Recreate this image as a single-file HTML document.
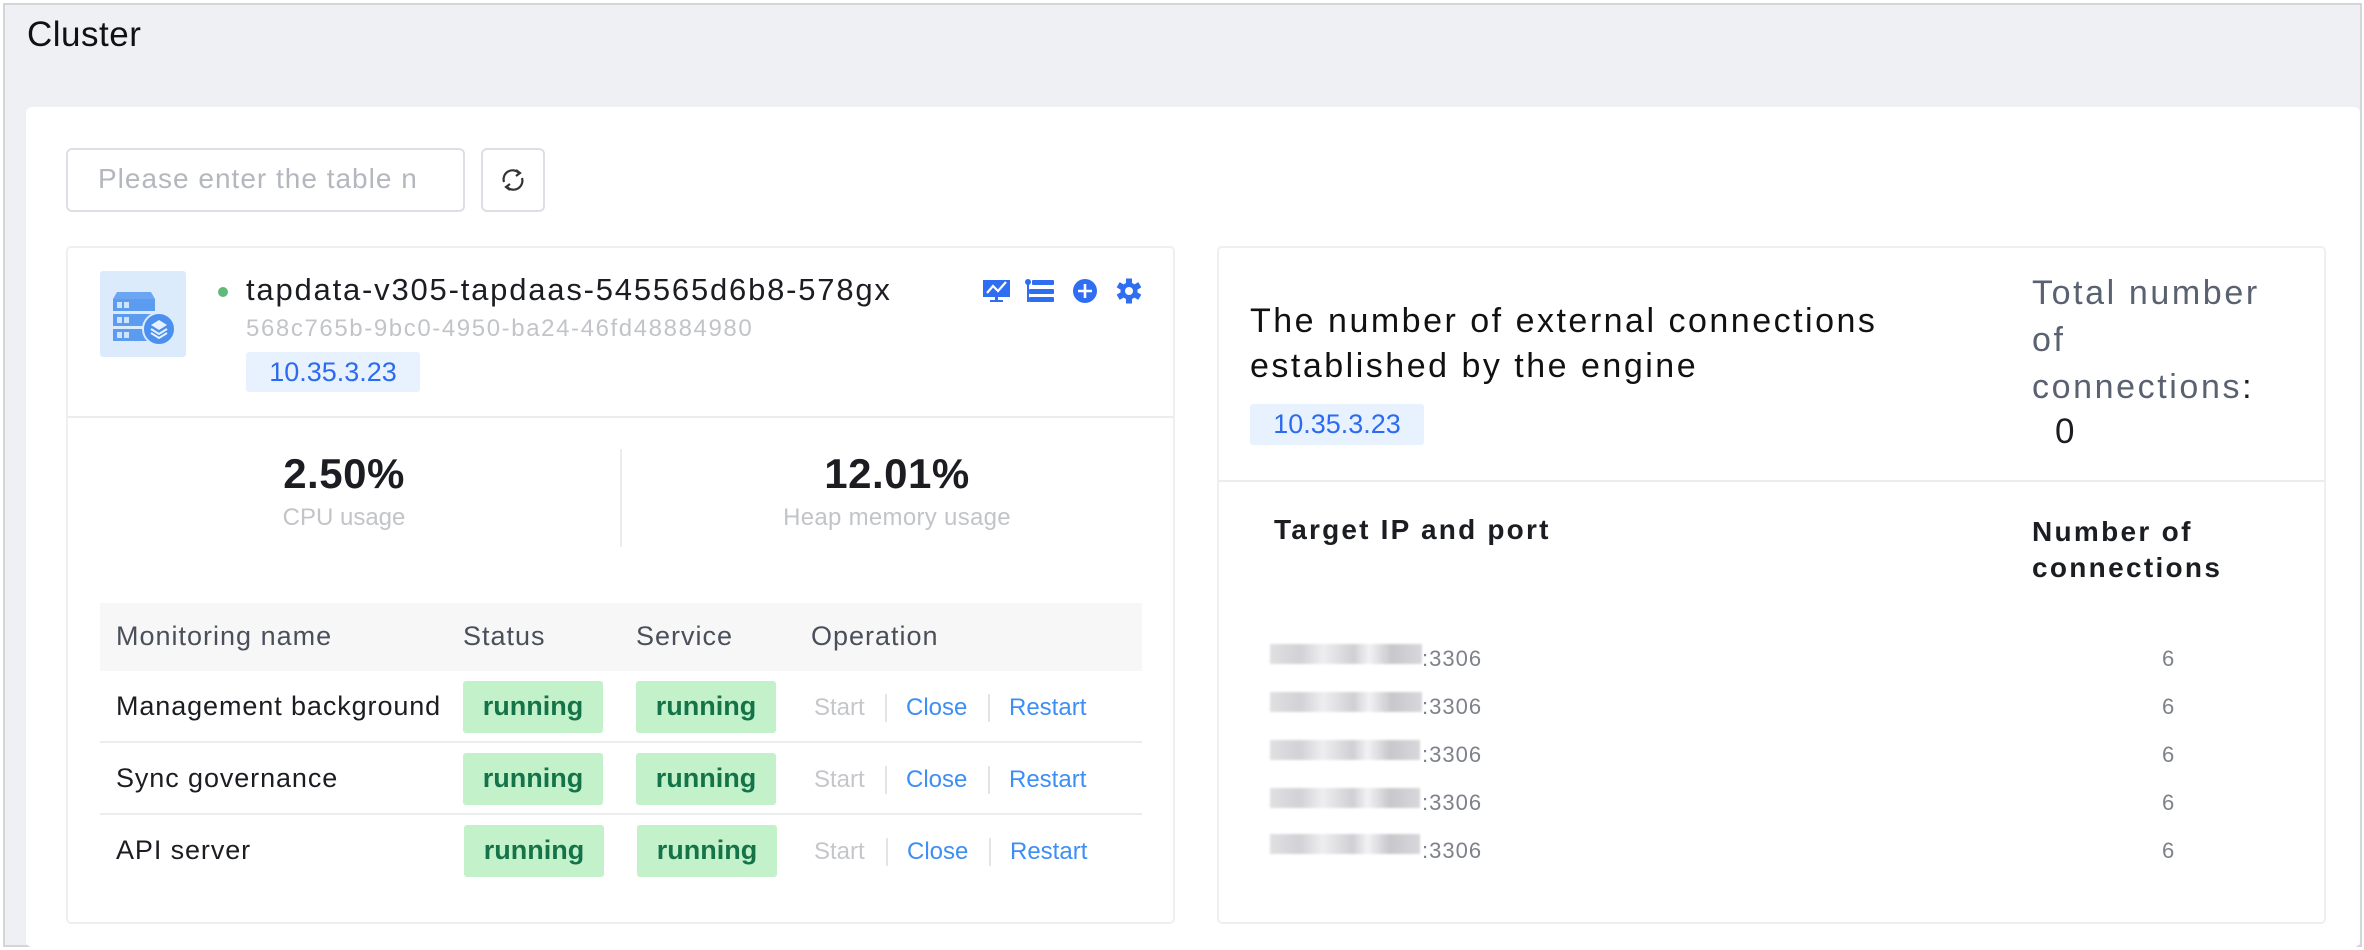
<!DOCTYPE html>
<html><head><meta charset="utf-8"><style>
*{box-sizing:border-box;margin:0;padding:0}
body{width:2364px;height:950px;background:#fff;font-family:"Liberation Sans",sans-serif;position:relative;overflow:hidden}
.frame{position:absolute;left:3px;top:3px;width:2359px;height:944px;border:2px solid #d4d5d8;background:#eff0f3}
.abs{position:absolute}
.t{position:absolute;white-space:nowrap}
.panel{position:absolute;left:26px;top:107px;width:2334px;height:840px;background:#fff;border-radius:6px}
.card{position:absolute;border:2px solid #eeeff1;border-radius:5px;background:#fff}
.tag{position:absolute;background:#e8f1fe;color:#2c6bf0;border-radius:3px;font-size:27px;text-align:center}
.badge{position:absolute;width:140px;height:52px;background:#c2f1ca;color:#157349;font-size:27px;font-weight:bold;text-align:center;line-height:50px;border-radius:3px}
.op{position:absolute;font-size:24px}
.sep{position:absolute;width:2px;height:28px;background:#e3e4e7}
.blur{position:absolute;height:20px;background:linear-gradient(90deg,#e0e0e3 0,#d2d2d6 20%,#eeeef0 35%,#d0d0d4 55%,#f2f2f4 65%,#c8c8cc 80%,#d8d8dc 100%);filter:blur(1px)}
.r{font-size:22px;color:#7d818a;letter-spacing:1px}
</style></head><body>
<div class="frame"></div>
<div class="t" style="left:27px;top:15px;font-size:35px;letter-spacing:0.5px;color:#111">Cluster</div>
<div class="panel"></div>
<div class="abs" style="left:66px;top:148px;width:399px;height:64px;border:2px solid #dcdfe4;border-radius:6px"></div>
<div class="t" style="left:98px;top:163px;font-size:28px;letter-spacing:1px;color:#b4b7bd">Please enter the table n</div>
<div class="abs" style="left:481px;top:148px;width:64px;height:64px;border:2px solid #dcdfe4;border-radius:6px"></div>
<svg class="abs" style="left:499px;top:165px" width="28" height="30" viewBox="0 0 28 30"><path d="M5 17a9 9 0 0 1 15-9" stroke="#333" stroke-width="2.2" fill="none"/><path d="M17 5l4 3-4 3" stroke="#333" stroke-width="2.2" fill="none"/><path d="M23 13a9 9 0 0 1-15 9" stroke="#333" stroke-width="2.2" fill="none"/><path d="M11 25l-4-3 4-3" stroke="#333" stroke-width="2.2" fill="none"/></svg>

<div class="card" style="left:66px;top:246px;width:1109px;height:678px"></div>
<div class="abs" style="left:100px;top:271px;width:86px;height:86px;background:#dcebfc;border-radius:3px"></div>
<svg class="abs" style="left:100px;top:271px" width="86" height="86" viewBox="0 0 86 86">
<path d="M13 28l4-7h34l4 7z" fill="#6aa6f2"/><rect x="13" y="28" width="42" height="12" fill="#5b9cf0"/><rect x="13" y="43" width="42" height="12" fill="#5b9cf0"/><rect x="13" y="58" width="42" height="12" fill="#5b9cf0"/>
<rect x="17" y="31" width="5" height="6" fill="#cfe3fb"/><rect x="24" y="31" width="5" height="6" fill="#cfe3fb"/><rect x="17" y="46" width="5" height="6" fill="#cfe3fb"/><rect x="24" y="46" width="5" height="6" fill="#cfe3fb"/><rect x="17" y="61" width="5" height="6" fill="#cfe3fb"/><rect x="24" y="61" width="5" height="6" fill="#cfe3fb"/>
<circle cx="59" cy="58" r="16" fill="#4b90ee" stroke="#dcebfc" stroke-width="2"/>
<path d="M51 54l8-5 8 5-8 5z" fill="#e8f1fe"/><path d="M51 58l8 5 8-5" stroke="#e8f1fe" stroke-width="2" fill="none"/><path d="M51 62l8 5 8-5" stroke="#e8f1fe" stroke-width="2" fill="none"/></svg>
<div class="abs" style="left:218px;top:287px;width:10px;height:10px;border-radius:50%;background:#5fb97a"></div>
<div class="t" style="left:246px;top:272px;font-size:31px;letter-spacing:1.8px;color:#1b1d22">tapdata-v305-tapdaas-545565d6b8-578gx</div>
<div class="t" style="left:246px;top:315px;font-size:24px;letter-spacing:1.6px;color:#c2c4c8">568c765b-9bc0-4950-ba24-46fd48884980</div>
<div class="tag" style="left:246px;top:352px;width:174px;height:40px;line-height:40px">10.35.3.23</div>
<svg class="abs" style="left:982px;top:278px" width="164" height="26" viewBox="0 0 164 26">
<rect x="1" y="2" width="27" height="17" fill="#2f6ef0"/><path d="M5 15l6-7 5 5 8-9" stroke="#fff" stroke-width="2.2" fill="none"/><rect x="13" y="19" width="3" height="4" fill="#2f6ef0"/><rect x="8" y="22" width="13" height="2" fill="#2f6ef0"/>
<circle cx="46" cy="4" r="3" fill="#2f6ef0"/><rect x="45" y="4" width="2" height="20" fill="#2f6ef0"/><rect x="50" y="2" width="22" height="5" rx="1" fill="#2f6ef0"/><rect x="47" y="11" width="25" height="5" rx="1" fill="#2f6ef0"/><rect x="47" y="19" width="25" height="5" rx="1" fill="#2f6ef0"/>
<circle cx="103" cy="13" r="12" fill="#2f6ef0"/><path d="M103 6v14M96 13h14" stroke="#fff" stroke-width="2.6"/>
<g transform="translate(147,13)"><circle r="8.5" fill="#2f6ef0"/><g fill="#2f6ef0"><rect x="-3" y="-12.5" width="6" height="25"/><rect x="-3" y="-12.5" width="6" height="25" transform="rotate(60)"/><rect x="-3" y="-12.5" width="6" height="25" transform="rotate(120)"/></g><circle r="4" fill="#fff"/></g></svg>
<div class="abs" style="left:68px;top:416px;width:1105px;height:2px;background:#ebecee"></div>
<div class="t" style="left:194px;top:450px;width:300px;text-align:center;font-size:42px;letter-spacing:0.5px;font-weight:bold;color:#1b1d22">2.50%</div>
<div class="t" style="left:194px;top:504px;width:300px;text-align:center;font-size:24px;color:#c2c4c8">CPU usage</div>
<div class="abs" style="left:620px;top:449px;width:2px;height:98px;background:#ebecee"></div>
<div class="t" style="left:747px;top:450px;width:300px;text-align:center;font-size:42px;letter-spacing:0.5px;font-weight:bold;color:#1b1d22">12.01%</div>
<div class="t" style="left:722px;top:504px;width:350px;text-align:center;font-size:24px;letter-spacing:0.3px;color:#c2c4c8">Heap memory usage</div>

<div class="abs" style="left:100px;top:603px;width:1042px;height:68px;background:#f7f7f8"></div>
<div class="t" style="left:116px;top:621px;font-size:27px;letter-spacing:1px;color:#4a4f5a">Monitoring name</div>
<div class="t" style="left:463px;top:621px;font-size:27px;letter-spacing:1px;color:#4a4f5a">Status</div>
<div class="t" style="left:636px;top:621px;font-size:27px;letter-spacing:1px;color:#4a4f5a">Service</div>
<div class="t" style="left:811px;top:621px;font-size:27px;letter-spacing:1px;color:#4a4f5a">Operation</div>
<div class="abs" style="left:100px;top:741px;width:1042px;height:2px;background:#ebecee"></div>
<div class="abs" style="left:100px;top:813px;width:1042px;height:2px;background:#ebecee"></div>

<div class="t" style="left:116px;top:691px;font-size:27px;letter-spacing:0.9px;color:#1b1d22">Management background</div>
<div class="badge" style="left:463px;top:681px">running</div><div class="badge" style="left:636px;top:681px">running</div>
<div class="op" style="left:814px;top:694px;color:#c4c6ca">Start</div><div class="sep" style="left:885px;top:694px"></div>
<div class="op" style="left:906px;top:694px;color:#3d8ef5">Close</div><div class="sep" style="left:988px;top:694px"></div>
<div class="op" style="left:1009px;top:694px;color:#3d8ef5">Restart</div>

<div class="t" style="left:116px;top:763px;font-size:27px;letter-spacing:0.9px;color:#1b1d22">Sync governance</div>
<div class="badge" style="left:463px;top:753px">running</div><div class="badge" style="left:636px;top:753px">running</div>
<div class="op" style="left:814px;top:766px;color:#c4c6ca">Start</div><div class="sep" style="left:885px;top:766px"></div>
<div class="op" style="left:906px;top:766px;color:#3d8ef5">Close</div><div class="sep" style="left:988px;top:766px"></div>
<div class="op" style="left:1009px;top:766px;color:#3d8ef5">Restart</div>

<div class="t" style="left:116px;top:835px;font-size:27px;letter-spacing:0.9px;color:#1b1d22">API server</div>
<div class="badge" style="left:464px;top:825px">running</div><div class="badge" style="left:637px;top:825px">running</div>
<div class="op" style="left:814px;top:838px;color:#c4c6ca">Start</div><div class="sep" style="left:886px;top:838px"></div>
<div class="op" style="left:907px;top:838px;color:#3d8ef5">Close</div><div class="sep" style="left:989px;top:838px"></div>
<div class="op" style="left:1010px;top:838px;color:#3d8ef5">Restart</div>

<div class="card" style="left:1217px;top:246px;width:1109px;height:678px"></div>
<div class="t" style="left:1250px;top:299px;font-size:34px;letter-spacing:2.5px;line-height:45px;color:#111">The number of external connections<br>established by the engine</div>
<div class="tag" style="left:1250px;top:404px;width:174px;height:41px;line-height:41px">10.35.3.23</div>
<div class="t" style="left:2032px;top:270px;font-size:34px;letter-spacing:2.6px;line-height:47px;color:#5a6170">Total number<br>of<br>connections<span style="color:#1b1d22">:</span></div>
<div class="t" style="left:2055px;top:412px;font-size:35px;color:#1b1d22">0</div>
<div class="abs" style="left:1219px;top:480px;width:1105px;height:2px;background:#ebecee"></div>
<div class="t" style="left:1274px;top:514px;font-size:28px;letter-spacing:2.2px;font-weight:bold;color:#1b1d22">Target IP and port</div>
<div class="t" style="left:2032px;top:514px;font-size:28px;letter-spacing:2.3px;line-height:36px;font-weight:bold;color:#1b1d22">Number of<br>connections</div>

<div class="blur" style="left:1270px;top:644px;width:152px"></div><div class="t r" style="left:1422px;top:646px">:3306</div><div class="t r" style="left:2162px;top:646px">6</div>
<div class="blur" style="left:1270px;top:692px;width:152px"></div><div class="t r" style="left:1422px;top:694px">:3306</div><div class="t r" style="left:2162px;top:694px">6</div>
<div class="blur" style="left:1270px;top:740px;width:150px"></div><div class="t r" style="left:1422px;top:742px">:3306</div><div class="t r" style="left:2162px;top:742px">6</div>
<div class="blur" style="left:1270px;top:788px;width:150px"></div><div class="t r" style="left:1422px;top:790px">:3306</div><div class="t r" style="left:2162px;top:790px">6</div>
<div class="blur" style="left:1270px;top:834px;width:150px"></div><div class="t r" style="left:1422px;top:838px">:3306</div><div class="t r" style="left:2162px;top:838px">6</div>
</body></html>
